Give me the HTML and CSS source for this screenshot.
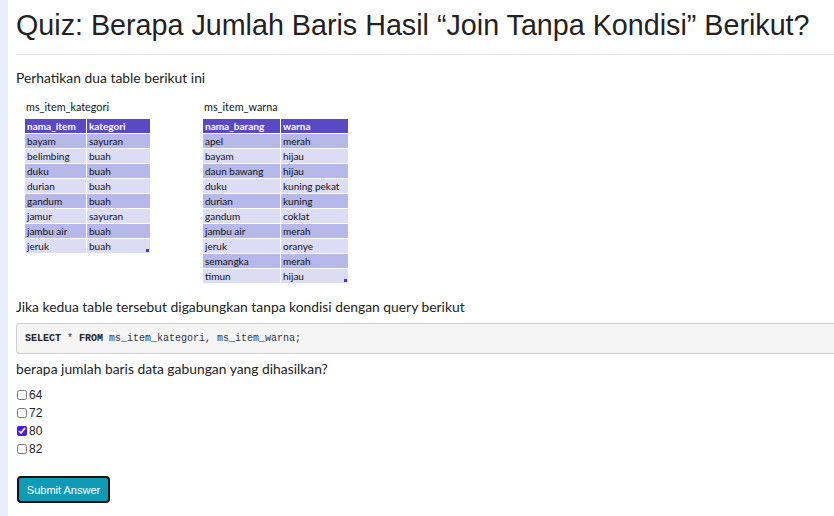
FILE: index.html
```html
<!DOCTYPE html>
<html>
<head>
<meta charset="utf-8">
<link rel="stylesheet" href="styles.css">
</head>
<body>
<div class="page">
  <aside class="strip"></aside>
  <main class="content">
    <h1 class="title">Quiz: Berapa Jumlah Baris Hasil “Join Tanpa Kondisi” Berikut?</h1>
    <hr class="rule">
    <p class="text">Perhatikan dua table berikut ini</p>
    <div class="tables">
      <div class="tbl tbl-left">
        <div class="caption">ms_item_kategori</div>
        <table class="data">
          <colgroup><col class="c1a"><col class="c2a"></colgroup>
          <tr class="head"><td>nama_item</td><td>kategori</td></tr>
          <tr class="dark"><td>bayam</td><td>sayuran</td></tr>
          <tr class="light"><td>belimbing</td><td>buah</td></tr>
          <tr class="dark"><td>duku</td><td>buah</td></tr>
          <tr class="light"><td>durian</td><td>buah</td></tr>
          <tr class="dark"><td>gandum</td><td>buah</td></tr>
          <tr class="light"><td>jamur</td><td>sayuran</td></tr>
          <tr class="dark"><td>jambu air</td><td>buah</td></tr>
          <tr class="light"><td>jeruk</td><td class="last">buah<span class="grip"></span></td></tr>
        </table>
      </div>
      <div class="tbl tbl-right">
        <div class="caption">ms_item_warna</div>
        <table class="data">
          <colgroup><col class="c1b"><col class="c2b"></colgroup>
          <tr class="head"><td>nama_barang</td><td>warna</td></tr>
          <tr class="dark"><td>apel</td><td>merah</td></tr>
          <tr class="light"><td>bayam</td><td>hijau</td></tr>
          <tr class="dark"><td>daun bawang</td><td>hijau</td></tr>
          <tr class="light"><td>duku</td><td>kuning pekat</td></tr>
          <tr class="dark"><td>durian</td><td>kuning</td></tr>
          <tr class="light"><td>gandum</td><td>coklat</td></tr>
          <tr class="dark"><td>jambu air</td><td>merah</td></tr>
          <tr class="light"><td>jeruk</td><td>oranye</td></tr>
          <tr class="dark"><td>semangka</td><td>merah</td></tr>
          <tr class="light"><td>timun</td><td class="last">hijau<span class="grip"></span></td></tr>
        </table>
      </div>
    </div>
    <p class="text q2">Jika kedua table tersebut digabungkan tanpa kondisi dengan query berikut</p>
    <pre class="code"><b>SELECT</b> * <b>FROM</b> ms_item_kategori, ms_item_warna;</pre>
    <p class="text q3">berapa jumlah baris data gabungan yang dihasilkan?</p>
    <form class="options">
      <label class="opt"><input type="checkbox"><span>64</span></label>
      <label class="opt"><input type="checkbox"><span>72</span></label>
      <label class="opt"><input type="checkbox" checked><span>80</span></label>
      <label class="opt"><input type="checkbox"><span>82</span></label>
      <button type="button" class="submit">Submit Answer</button>
    </form>
  </main>
</div>
</body>
</html>
```
FILE: styles.css
```css
html, body {
  margin: 0;
  padding: 0;
  background: #fff;
  overflow: hidden;
}
.page {
  display: flex;
  min-height: 516px;
  width: 850px;
}
.strip {
  width: 8px;
  flex: none;
  background: #e8eefc;
}
.content {
  flex: 1;
  padding-left: 8px;
}
.title {
  margin: 7px 0 0 0;
  font-family: "Liberation Sans", Arial, sans-serif;
  font-weight: normal;
  font-size: 28.7px;
  line-height: 36px;
  color: #222;
  white-space: nowrap;
}
.rule {
  margin: 11px 0 0 0;
  border: 0;
  border-top: 1px solid #e6e6e6;
}
.text {
  font-family: Lato, "Open Sans", sans-serif;
  font-size: 13.85px;
  line-height: 18px;
  color: #222;
  margin: 14px 0 0 0;
}
.tables {
  display: flex;
  margin-top: 13px;
  gap: 51px;
  padding-left: 8px;
}
.caption {
  font-family: Lato, "Open Sans", sans-serif;
  font-size: 10.8px;
  line-height: 13px;
  color: #111;
  padding-left: 2px;
  margin-bottom: 6px;
}
.data {
  border-collapse: collapse;
  font-family: Lato, "Open Sans", sans-serif;
  font-size: 10px;
  color: #111;
  table-layout: fixed;
}
.data td {
  height: 14px;
  padding: 0 0 0 2px;
  border: 1px solid #fff;
  border-top-width: 0;
  line-height: 13px;
  white-space: nowrap;
  position: relative;
}
.c1a { width: 62px; }
.c2a { width: 64px; }
.c1b { width: 78px; }
.c2b { width: 68px; }
.head td {
  background: #5a49c6;
  color: #fff;
  font-weight: bold;
}
.dark td { background: #b6b8ea; }
.light td { background: #dcdcf5; }
.grip {
  position: absolute;
  right: 1px;
  bottom: 1px;
  width: 3px;
  height: 3px;
  background: #4b38c0;
}
.q2 { margin-top: 14px; }
.code {
  margin: 7px 0 0 0;
  background: #f5f5f5;
  border: 1px solid #cfcfcf;
  border-right: 0;
  border-radius: 4px 0 0 4px;
  padding: 8px 8px;
  font-family: "Liberation Mono", "Courier New", monospace;
  font-size: 10px;
  line-height: 13px;
  color: #333;
}
.code b { color: #222; }
.q3 { margin-top: 6px; }
.options {
  margin-top: 8px;
  display: flex;
  flex-direction: column;
  align-items: flex-start;
}
.opt {
  display: flex;
  align-items: center;
  height: 18px;
  font-family: "Liberation Sans", Arial, sans-serif;
  font-size: 12px;
  color: #222;
}
.opt input {
  margin: 0 2px 0 1px;
  width: 10px;
  height: 10px;
  accent-color: #4a1de0;
}
.submit {
  margin-top: 18px;
  margin-left: 1px;
  background: #0f9bb6;
  color: #fff;
  border: 2px solid #111;
  border-radius: 4px;
  font-family: "Liberation Sans", Arial, sans-serif;
  font-size: 11px;
  height: 27px;
  padding: 0 7px;
  width: 93px;
}
```
